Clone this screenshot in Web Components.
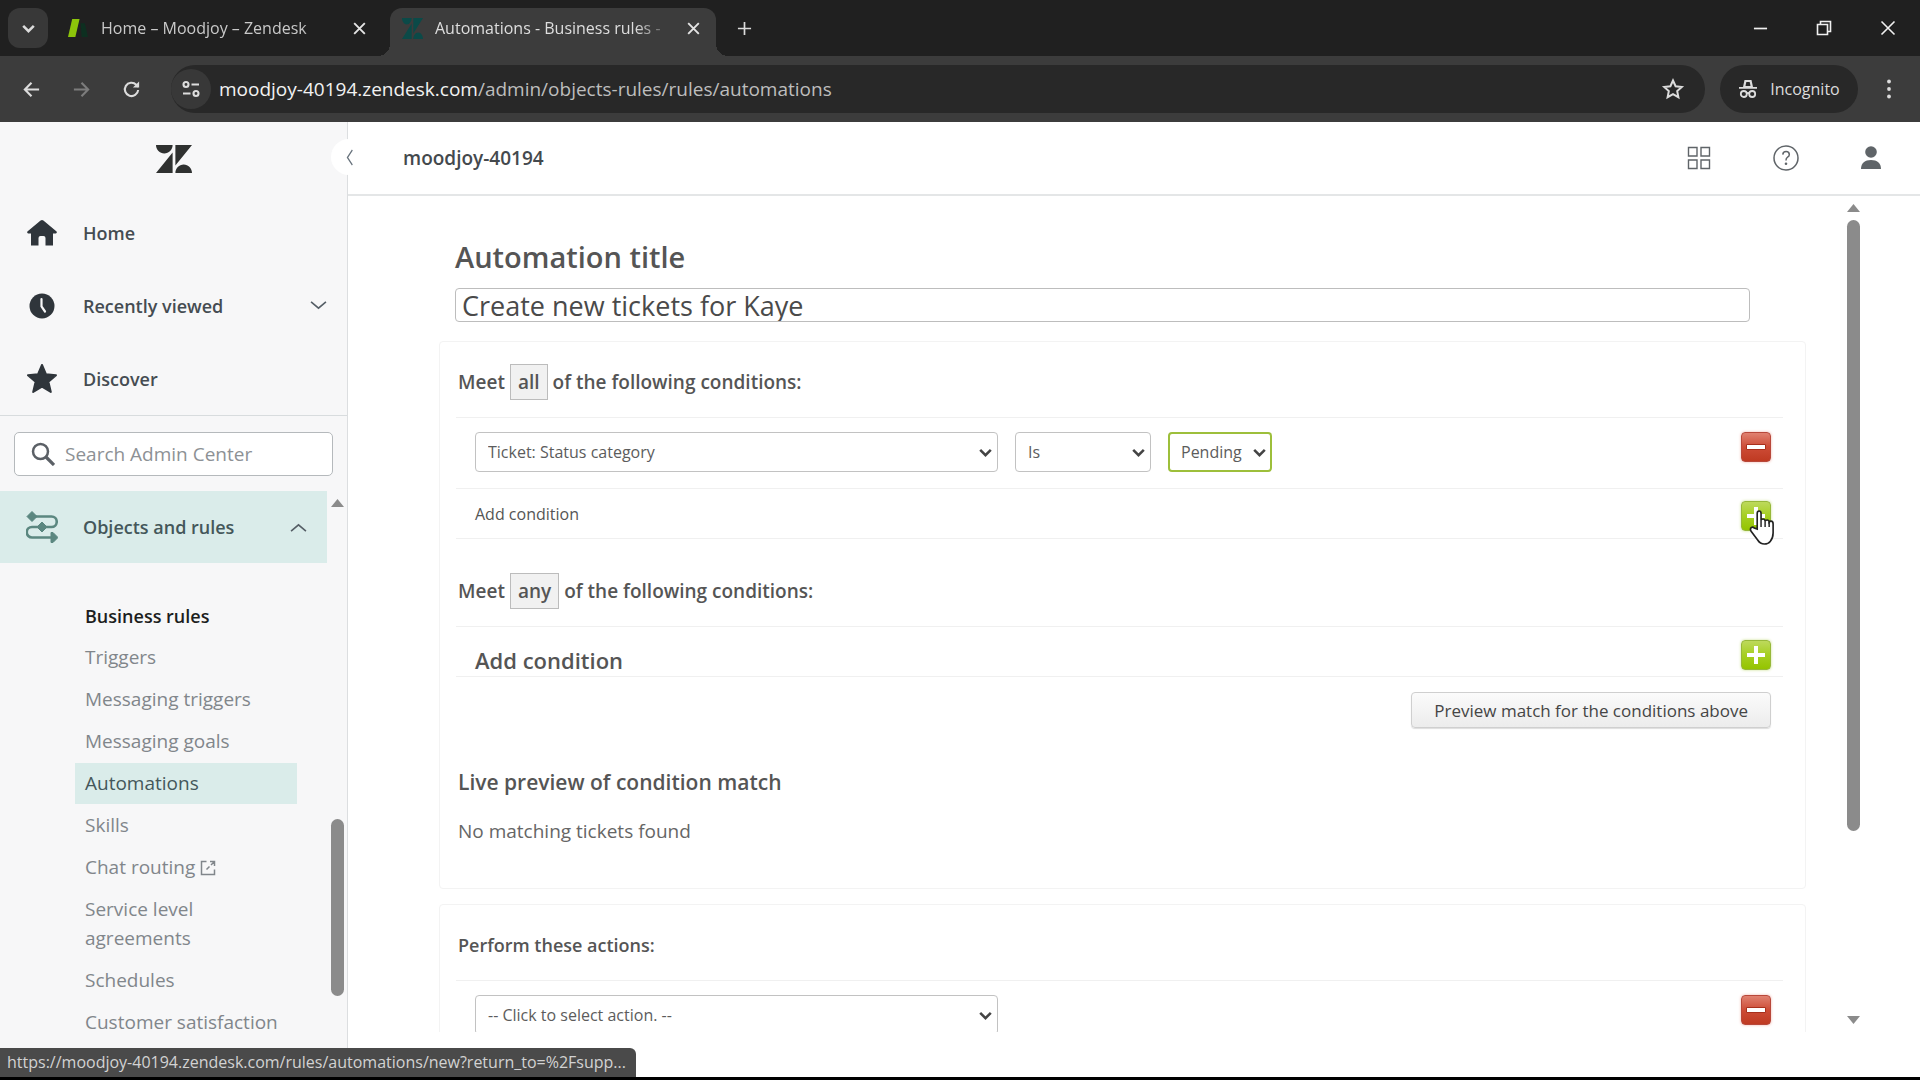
<!DOCTYPE html>
<html lang="en">
<head>
<meta charset="utf-8">
<title>Automations - Business rules - Zendesk</title>
<style>
  body {
    margin: 0;
    font-family: "Open Sans", "Noto Sans", sans-serif;
    color: #555;
    background: #000;
  }
</style>
</head>
<body>
<browser-window>
  <browser-tab slot="tabs" icon="support">Home – Moodjoy – Zendesk</browser-tab>
  <browser-tab slot="tabs" icon="zendesk" active>Automations - Business rules -</browser-tab>
  <admin-sidebar></admin-sidebar>
  <admin-main>
    <automation-form></automation-form>
  </admin-main>
  <span slot="status">https://moodjoy-40194.zendesk.com/rules/automations/new?return_to=%2Fsupp...</span>
</browser-window>

<script>
// all icons, drawn with currentColor
const ICONS = {
  zendesk: ['0 3 26 19.7', '<path d="M12 8.2v14.5H0zM12 3c0 3.3-2.7 6-6 6S0 6.3 0 3h12zm2 19.7c0-3.3 2.7-6 6-6s6 2.7 6 6H14zm0-5.2V3h12z" fill="currentColor"/>'],
  support: ['0 0 20 20', '<path d="M12 5h4l3 13h-6z" fill="#0d2f20"/><path d="M4 1h7L7 18H0z" fill="#8cc40a"/>'],
  chevron: ['0 0 16 16', '<path d="M1 4.5l7 6 7-6" fill="none" stroke="currentColor" stroke-width="1.5"/>'],
  chevronBold: ['0 0 16 16', '<path d="M3 5.5l5 5 5-5" fill="none" stroke="currentColor" stroke-width="2.4"/>'],
  close: ['0 0 16 16', '<path d="M3 3l10 10M13 3L3 13" fill="none" stroke="currentColor" stroke-width="1.8"/>'],
  add: ['0 0 16 16', '<path d="M8 1v14M1 8h14" fill="none" stroke="currentColor" stroke-width="1.8"/>'],
  minimize: ['0 0 16 16', '<path d="M1 8h14" stroke="currentColor" stroke-width="1.8"/>'],
  restore: ['0 0 16 16', '<path d="M1.5 4.5h10v10h-10zM4.5 4.5v-3h10v10h-3" fill="none" stroke="currentColor" stroke-width="1.6"/>'],
  windowClose: ['0 0 16 16', '<path d="M1.5 1.5l13 13M14.5 1.5l-13 13" stroke="currentColor" stroke-width="1.6"/>'],
  back: ['0 0 20 20', '<path d="M18 10H3M10 3l-7 7 7 7" fill="none" stroke="currentColor" stroke-width="2.2"/>'],
  forward: ['0 0 20 20', '<path d="M2 10h15M10 3l7 7-7 7" fill="none" stroke="currentColor" stroke-width="2.2"/>'],
  reload: ['0 0 20 20', '<path d="M17 10.5a7 7 0 1 1-2-5.5l2 2" fill="none" stroke="currentColor" stroke-width="2.2"/><path d="M18 1.5V8h-6.5z" fill="currentColor"/>'],
  tune: ['0 0 20 20', '<g fill="none" stroke="currentColor" stroke-width="2.1"><circle cx="5" cy="5.5" r="2.5"/><path d="M10.5 5.5H18M2 14.5h7.5"/><circle cx="15" cy="14.5" r="2.5"/></g>'],
  starLine: ['0 0 24 24', '<path d="M12 3.5l2.6 5.7 6.2.7-4.6 4.2 1.2 6.1-5.4-3.1-5.4 3.1 1.2-6.1L3.2 9.9l6.2-.7z" fill="none" stroke="currentColor" stroke-width="2"/>'],
  incognito: ['0 0 20 20', '<path d="M5 8L6.5 1h7L15 8h4v1.8H1V8z" fill="currentColor"/><path d="M7.5 7h5l-.8-4H8.3z" fill="#282828"/><g fill="none" stroke="currentColor" stroke-width="1.8"><circle cx="5.8" cy="15" r="3"/><circle cx="14.2" cy="15" r="3"/><path d="M8.5 14.5q1.5-1 3 0"/></g>'],
  dots: ['0 0 20 20', '<g fill="currentColor"><circle cx="10" cy="2.5" r="1.9"/><circle cx="10" cy="10" r="1.9"/><circle cx="10" cy="17.5" r="1.9"/></g>'],
  home: ['0 0 30 30', '<path d="M13.6 2.6a2 2 0 0 1 2.8 0L29.6 13.4q.8 1.6-.8 2.1H26v12h-7.5V20a2 2 0 0 0-2-2h-3a2 2 0 0 0-2 2v7.5H4v-12H1.2Q-.4 15 .4 13.4z" fill="currentColor"/>'],
  clock: ['0 0 26 26', '<circle cx="13" cy="13" r="12.5" fill="currentColor"/><path d="M12.5 6v7.5l3.5 5" fill="none" stroke="#f7f7f8" stroke-width="2.2" stroke-linecap="round"/>'],
  star: ['0 0 30 30', '<path d="M15 1l4 9.3 10 .9-7.6 6.6 2.4 10.2-8.8-5.3L6.2 28l2.4-10.2L1 11.2l10-.9z" fill="currentColor" stroke="currentColor" stroke-width="2" stroke-linejoin="round"/>'],
  search: ['0 0 24 24', '<circle cx="9.5" cy="9.5" r="7.5" fill="none" stroke="currentColor" stroke-width="2.5"/><path d="M15 15l8 8" stroke="currentColor" stroke-width="3.2"/>'],
  objects: ['0 0 32 32', '<path d="M6 5.5h19.5a5.25 5.25 0 0 1 0 10.5H6a5.25 5.25 0 0 0 0 10.5h20" fill="none" stroke="currentColor" stroke-width="2.6"/><path d="M6 .5l5 5-5 5-5-5zM16 11l5 5-5 5-5-5zM25 21.5h2l5 5-5 5h-2z" fill="currentColor" stroke="currentColor" stroke-linejoin="round"/>'],
  external: ['0 0 16 16', '<path d="M6.5 1.5h-5v13h13v-5M6.5 9.5l3-3M10 1.5h4.5V6M14.5 1.5L11 5" fill="none" stroke="currentColor" stroke-width="1.5"/>'],
  grid: ['0 0 24 24', '<path d="M1.5 1.5H10V10H1.5zM14 1.5h8.5V10H14zM1.5 14H10v8.5H1.5zM14 14h8.5v8.5H14z" fill="none" stroke="currentColor" stroke-width="1.4"/>'],
  help: ['0 0 26 26', '<circle cx="13" cy="13" r="12" fill="none" stroke="currentColor" stroke-width="1.5"/><path d="M9.8 9.6q.2-3 3.3-3t3.2 2.8q0 1.7-1.7 2.8T13 15.5" fill="none" stroke="currentColor" stroke-width="1.5"/><circle cx="13" cy="18.8" r="1.3" fill="currentColor"/>'],
  user: ['0 0 20 24', '<circle cx="10" cy="6" r="5.8" fill="currentColor"/><path d="M0 23c0-6 4-9 10-9s10 3 10 9z" fill="currentColor"/>'],
  up: ['0 0 12 8', '<path d="M6 0l6 8H0z" fill="currentColor"/>'],
  down: ['0 0 12 8', '<path d="M0 0h12L6 8z" fill="currentColor"/>'],
  hand: ['0 0 28 36', '<path d="M8.5 19V3.5Q8.5 1 10.5 1t2 2.5V10q.3-1 2-1 2 0 2.2 2 .3-1 2-1 2 0 2.2 2 .5-.8 2-.8 2.1 0 2.1 2.8v9q0 5-3 8.500-2 2.500-6 2.500-4.500 0-7-4L2 21q-1.200-2.500.5-3.500 1.500-.8 3 .5z" fill="#fff" stroke="#222" stroke-width="1.7"/><path d="M12.5 10v7M16.7 11v6M20.9 12v5" stroke="#222" stroke-width="1.5"/>']
};

class UiIcon extends HTMLElement {
  connectedCallback() {
    const [box, shapes] = ICONS[this.getAttribute('name')];
    const width = this.getAttribute('width') || 16;
    const height = this.getAttribute('height') || width;
    this.attachShadow({ mode: 'open' }).innerHTML = `
      <style>
        :host { display: inline-flex; flex: none; }
        svg { display: block; }
      </style>
      <svg width="${width}" height="${height}" viewBox="${box}" preserveAspectRatio="none" aria-hidden="true">${shapes}</svg>
    `;
  }
}

class BrowserTab extends HTMLElement {
  connectedCallback() {
    this.attachShadow({ mode: 'open' }).innerHTML = `
      <style>
        :host {
          display: flex;
          align-items: center;
          gap: 12px;
          box-sizing: border-box;
          flex: 0 1 326px;
          min-width: 0;
          height: 48px;
          padding: 0 14px 8px 12px;
          color: #c9c9c9;
          font-size: 16px;
        }
        :host([active]) {
          position: relative;
          background: #3c3c3c;
          border-radius: 12px 12px 0 0;
          color: #dedede;
        }
        /* flared feet of the active tab */
        :host([active])::before, :host([active])::after {
          content: "";
          position: absolute;
          bottom: 0;
          width: 12px;
          height: 12px;
        }
        :host([active])::before {
          right: 100%;
          background: radial-gradient(circle at 0 0, transparent 12px, #3c3c3c 12px);
        }
        :host([active])::after {
          left: 100%;
          background: radial-gradient(circle at 100% 0, transparent 12px, #3c3c3c 12px);
        }
        .icon { color: #0b4a48; }
        .title {
          flex: 1;
          min-width: 0;
          overflow: hidden;
          white-space: nowrap;
          mask-image: linear-gradient(90deg, #000 84%, transparent);
        }
        button {
          display: flex;
          padding: 0;
          border: 0;
          background: none;
          color: #e4e4e4;
        }
      </style>
      <ui-icon class="icon" name="${this.getAttribute('icon')}" width="21"></ui-icon>
      <span class="title"><slot></slot></span>
      <button aria-label="Close tab"><ui-icon name="close" width="17"></ui-icon></button>
    `;
  }
}

class BrowserWindow extends HTMLElement {
  connectedCallback() {
    this.attachShadow({ mode: 'open' }).innerHTML = `
      <style>
        :host {
          display: flex;
          flex-direction: column;
          position: relative;
          box-sizing: border-box;
          height: 100vh;
          padding-bottom: 3px;
        }
        button {
          display: flex;
          align-items: center;
          justify-content: center;
          padding: 0;
          border: 0;
          background: none;
          color: #dcdcdc;
          font: inherit;
        }
        .tabs {
          display: flex;
          align-items: flex-end;
          gap: 8px;
          flex: none;
          height: 56px;
          padding-left: 8px;
          background: #202020;
        }
        .search-tabs {
          width: 40px;
          height: 40px;
          margin-bottom: 8px;
          border-radius: 12px;
          background: #383838;
        }
        .new-tab { width: 40px; height: 56px; }
        .window { display: flex; margin-left: auto; }
        .window button { width: 64px; height: 56px; color: #f0f0f0; }
        .toolbar {
          display: flex;
          align-items: center;
          flex: none;
          box-sizing: border-box;
          height: 66px;
          padding: 0 6px;
          background: #3c3c3c;
        }
        .toolbar > button { width: 50px; height: 48px; }
        .toolbar > .forward { color: #7c7c7c; }
        .address {
          display: flex;
          align-items: center;
          flex: 1;
          height: 48px;
          margin: 0 15px;
          padding-right: 20px;
          border-radius: 24px;
          background: #282828;
          color: #bdbdbd;
          font-size: 19px;
        }
        .site {
          width: 40px;
          height: 40px;
          margin-right: 8px;
          border-radius: 50%;
          background: #383838;
        }
        .url { flex: 1; }
        .url b { font-weight: 400; color: #f2f2f2; }
        .toolbar > .incognito {
          gap: 12px;
          width: 138px;
          margin-right: 6px;
          border-radius: 24px;
          background: #282828;
          font-size: 16px;
        }
        .page {
          display: flex;
          flex: 1;
          min-height: 0;
          background: #fff;
        }
        .status {
          position: absolute;
          left: 0;
          bottom: 3px;
          padding: 0 10px 0 7px;
          border-radius: 0 6px 0 0;
          background: #4a4a4a;
          color: #d2d2d2;
          font-size: 16px;
          line-height: 29px;
        }
      </style>
      <header class="tabs">
        <button class="search-tabs" aria-label="Search tabs"><ui-icon name="chevronBold" width="17"></ui-icon></button>
        <slot name="tabs"></slot>
        <button class="new-tab" aria-label="New tab"><ui-icon name="add" width="15"></ui-icon></button>
        <div class="window">
          <button aria-label="Minimize"><ui-icon name="minimize" width="15"></ui-icon></button>
          <button aria-label="Restore"><ui-icon name="restore" width="16"></ui-icon></button>
          <button aria-label="Close"><ui-icon name="windowClose" width="16"></ui-icon></button>
        </div>
      </header>
      <nav class="toolbar">
        <button aria-label="Back"><ui-icon name="back" width="19"></ui-icon></button>
        <button class="forward" aria-label="Forward"><ui-icon name="forward" width="19"></ui-icon></button>
        <button aria-label="Reload"><ui-icon name="reload" width="19"></ui-icon></button>
        <div class="address">
          <button class="site" aria-label="Site information"><ui-icon name="tune" width="20"></ui-icon></button>
          <div class="url" role="textbox" aria-label="Address"><b>moodjoy-40194.zendesk.com</b>/admin/objects-rules/rules/automations</div>
          <button aria-label="Bookmark"><ui-icon name="starLine" width="24"></ui-icon></button>
        </div>
        <button class="incognito"><ui-icon name="incognito" width="20"></ui-icon>Incognito</button>
        <button aria-label="Menu"><ui-icon name="dots" width="20"></ui-icon></button>
      </nav>
      <div class="page"><slot></slot></div>
      <div class="status"><slot name="status"></slot></div>
    `;
  }
}

/* decorative track: arrow, thumb, arrow. Thumb size comes from the --before, --thumb and --after shares */
class ScrollTrack extends HTMLElement {
  connectedCallback() {
    this.attachShadow({ mode: 'open' }).innerHTML = `
      <style>
        :host {
          display: flex;
          flex-direction: column;
          align-items: center;
          flex: none;
          box-sizing: border-box;
          width: 20px;
          padding: 8px 0;
          color: #8b8b8b;
        }
        .track {
          display: flex;
          flex-direction: column;
          flex: 1;
          width: 13px;
          margin: 8px 0;
        }
        .before { flex: var(--before, 0); }
        .thumb { flex: var(--thumb, 1); border-radius: 7px; background: #8b8b8b; }
        .after { flex: var(--after, 0); }
      </style>
      <ui-icon name="up" width="13" height="8"></ui-icon>
      <div class="track"><div class="before"></div><div class="thumb"></div><div class="after"></div></div>
      <ui-icon name="down" width="13" height="8"></ui-icon>
    `;
  }
}

class SidebarItem extends HTMLElement {
  connectedCallback() {
    const chevron = this.getAttribute('chevron');
    this.attachShadow({ mode: 'open' }).innerHTML = `
      <style>
        :host { display: block; }
        a {
          display: flex;
          align-items: center;
          box-sizing: border-box;
          height: 73px;
          padding: 0 20px 0 22px;
          color: #454c52;
          font-size: 18px;
          font-weight: 600;
          text-decoration: none;
        }
        .icon {
          display: flex;
          justify-content: center;
          width: 40px;
          margin-right: 21px;
          color: #2f353b;
        }
        .label { flex: 1; }
        .chevron { color: #555e66; }
        :host([active]) a { height: 72px; background: #daecea; color: #44575a; }
        :host([active]) .icon { color: #5b8780; }
        .chevron.up { transform: rotate(180deg); }
      </style>
      <a href="#">
        <span class="icon"><ui-icon name="${this.getAttribute('icon')}" width="${this.getAttribute('size')}"></ui-icon></span>
        <span class="label"><slot></slot></span>
        ${chevron ? `<ui-icon class="chevron ${chevron}" name="chevron" width="17"></ui-icon>` : ''}
      </a>
    `;
  }
}

class AdminSidebar extends HTMLElement {
  connectedCallback() {
    this.attachShadow({ mode: 'open' }).innerHTML = `
      <style>
        :host {
          display: flex;
          flex-direction: column;
          position: relative;
          flex: none;
          box-sizing: border-box;
          width: 348px;
          border-right: 1px solid #dcdee0;
          background: #f7f7f8;
        }
        .logo {
          display: flex;
          align-items: center;
          justify-content: center;
          flex: none;
          height: 74px;
          color: #2f3130;
        }
        .collapse {
          position: absolute;
          top: 17px;
          right: -20px;
          display: flex;
          align-items: center;
          justify-content: center;
          width: 36px;
          height: 36px;
          padding: 0;
          border: 0;
          border-radius: 50%;
          background: #fff;
          color: #68737d;
        }
        .collapse ui-icon { transform: rotate(90deg); }
        .search {
          display: flex;
          align-items: center;
          gap: 10px;
          flex: none;
          box-sizing: border-box;
          height: 44px;
          margin: 16px 14px 15px;
          padding: 0 16px;
          border: 1px solid #b5b9bc;
          border-radius: 5px;
          background: #fff;
          color: #5b6066;
        }
        .divider { flex: none; height: 1px; background: #d8dcde; }
        .search input {
          flex: 1;
          min-width: 0;
          padding: 0;
          border: 0;
          outline: 0;
          background: none;
          font: inherit;
          font-size: 19px;
        }
        .search input::placeholder { color: #8d9195; }
        .scroller { display: flex; flex: 1; min-height: 0; }
        .content { flex: 1; overflow: hidden; }
        h2 {
          margin: 39px 0 6px 85px;
          color: #1c1e20;
          font-size: 18px;
          font-weight: 600;
          line-height: 29px;
        }
        ul {
          display: grid;
          gap: 1px;
          margin: 0 30px 0 75px;
          padding: 0;
          list-style: none;
        }
        li a {
          display: block;
          padding: 6px 0 6px 10px;
          color: #81868b;
          font-size: 19px;
          line-height: 29px;
          text-decoration: none;
        }
        li a.current { background: #daecea; color: #44575a; }
        li a.short { padding-right: 80px; }
        li ui-icon { vertical-align: -2px; }
        /* the list continues below the fold */
        scroll-track { --before: 303; --thumb: 176; --after: 57; }
      </style>
      <div class="logo"><ui-icon name="zendesk" width="36" height="28"></ui-icon></div>
      <button class="collapse" aria-label="Collapse sidebar"><ui-icon name="chevron" width="17" height="13"></ui-icon></button>
      <sidebar-item icon="home" size="30">Home</sidebar-item>
      <sidebar-item icon="clock" size="26" chevron="down">Recently viewed</sidebar-item>
      <sidebar-item icon="star" size="30">Discover</sidebar-item>
      <div class="divider"></div>
      <label class="search">
        <ui-icon name="search" width="24"></ui-icon>
        <input type="search" placeholder="Search Admin Center" aria-label="Search Admin Center">
      </label>
      <div class="scroller">
        <div class="content">
          <sidebar-item icon="objects" size="32" chevron="up" active>Objects and rules</sidebar-item>
          <h2>Business rules</h2>
          <ul>
            <li><a href="#">Triggers</a></li>
            <li><a href="#">Messaging triggers</a></li>
            <li><a href="#">Messaging goals</a></li>
            <li><a href="#" class="current">Automations</a></li>
            <li><a href="#">Skills</a></li>
            <li><a href="#">Chat routing <ui-icon name="external" width="16"></ui-icon></a></li>
            <li><a href="#" class="short">Service level agreements</a></li>
            <li><a href="#">Schedules</a></li>
            <li><a href="#">Customer satisfaction</a></li>
          </ul>
        </div>
        <scroll-track></scroll-track>
      </div>
    `;
  }
}

class AdminMain extends HTMLElement {
  connectedCallback() {
    this.attachShadow({ mode: 'open' }).innerHTML = `
      <style>
        :host {
          display: flex;
          flex-direction: column;
          flex: 1;
          min-width: 0;
          background: #fff;
        }
        header {
          display: flex;
          align-items: center;
          gap: 62px;
          flex: none;
          height: 72px;
          padding: 0 39px 0 55px;
          border-bottom: 2px solid #e4e6e7;
          color: #5f6468;
        }
        strong {
          flex: 1;
          color: #44494d;
          font-size: 19px;
          font-weight: 600;
        }
        button {
          display: flex;
          padding: 0;
          border: 0;
          background: none;
          color: inherit;
        }
        .scroller {
          display: flex;
          flex: 1;
          min-height: 0;
          margin: 0 57px 45px 0;
        }
        .content { flex: 1; min-width: 0; overflow: hidden; }
        scroll-track { --thumb: 611; --after: 177; }
      </style>
      <header>
        <strong>moodjoy-40194</strong>
        <button aria-label="Products"><ui-icon name="grid" width="24"></ui-icon></button>
        <button aria-label="Help"><ui-icon name="help" width="26"></ui-icon></button>
        <button aria-label="Account"><ui-icon name="user" width="20" height="24"></ui-icon></button>
      </header>
      <div class="scroller">
        <div class="content"><slot></slot></div>
        <scroll-track></scroll-track>
      </div>
    `;
  }
}

class SelectBox extends HTMLElement {
  connectedCallback() {
    this.attachShadow({ mode: 'open' }).innerHTML = `
      <style>
        :host { display: grid; align-items: center; color: #5c5c5c; }
        select, ui-icon { grid-area: 1 / 1; }
        select {
          appearance: none;
          box-sizing: border-box;
          width: 100%;
          height: 40px;
          padding: 0 28px 0 12px;
          border: 1px solid #c2c2c2;
          border-radius: 4px;
          outline: 0;
          background: #fff;
          color: inherit;
          font: inherit;
          font-size: 16px;
        }
        :host([focused]) select { border: 2px solid #9dbf3b; padding-left: 11px; }
        ui-icon { justify-self: end; margin-right: 4px; color: #444; pointer-events: none; }
      </style>
      <select aria-label="${this.getAttribute('label')}"><option>${this.getAttribute('value')}</option></select>
      <ui-icon name="chevronBold" width="17"></ui-icon>
    `;
  }
}

class RowButton extends HTMLElement {
  connectedCallback() {
    const isAdd = this.getAttribute('kind') === 'add';
    this.attachShadow({ mode: 'open' }).innerHTML = `
      <style>
        :host { display: block; position: relative; flex: none; }
        button {
          display: grid;
          place-items: center;
          width: 30px;
          height: 30px;
          padding: 0;
          border: 1px solid ${isAdd ? '#97b83a' : '#b8483a'};
          border-radius: 4px;
          background: ${isAdd ? 'linear-gradient(#bdd95c, #a6cf22 50%, #94c400)' : 'linear-gradient(#e08170, #cd4c36 50%, #bf3a22)'};
          box-shadow: 0 0 3px ${isAdd ? '#c8e08a' : '#f0b4aa'};
        }
        svg { display: block; }
        ::slotted(*) { position: absolute; left: 8px; top: 9px; }
      </style>
      <button aria-label="${isAdd ? 'Add condition' : 'Remove'}">
        <svg width="20" height="20" viewBox="0 0 20 20">
          ${isAdd
            ? '<path d="M8 1h4v7h7v4h-7v7H8v-7H1V8h7z" fill="#fff"/>'
            : '<path d="M.5 7.5h19v5H.5z" fill="#fff" stroke="#a8301c"/>'}
        </svg>
      </button>
      <slot></slot>
    `;
  }
}

class RulePanel extends HTMLElement {
  connectedCallback() {
    this.attachShadow({ mode: 'open' }).innerHTML = `
      <style>
        :host {
          display: block;
          padding: 22px 22px 45px 16px;
          border: 1px solid #f3f3f3;
          border-radius: 4px;
        }
      </style>
      <slot></slot>
    `;
  }
}

class AutomationForm extends HTMLElement {
  connectedCallback() {
    this.attachShadow({ mode: 'open' }).innerHTML = `
      <style>
        :host { display: block; padding: 42px 37px 0 91px; }
        .title { display: grid; gap: 12px; margin: 0 56px 19px 16px; }
        .title label {
          font-size: 29px;
          font-weight: 600;
          line-height: 38px;
        }
        .title input {
          box-sizing: border-box;
          width: 100%;
          height: 34px;
          padding: 0 6px;
          border: 1px solid #bdbdbd;
          border-radius: 4px;
          outline: 0;
          color: #4a4a4a;
          font: inherit;
          font-size: 27px;
          line-height: 32px;
        }
        rule-panel { margin-bottom: 15px; }
        h3 {
          display: flex;
          align-items: center;
          gap: 5px;
          height: 36px;
          margin: 0 0 17px 2px;
          font-size: 19px;
          font-weight: 600;
        }
        h3.actions { font-size: 18px; }
        h3 em {
          padding: 0 7px;
          border: 1px solid #bcbcbc;
          background: #f1f1f1;
          font-style: normal;
          line-height: 34px;
        }
        .row {
          display: flex;
          align-items: flex-start;
          gap: 17px;
          box-sizing: border-box;
          height: 71px;
          padding: 14px 12px 0 19px;
          border-top: 1px solid #f0f0f0;
        }
        .row row-button { margin-left: auto; }
        .wide { flex: 0 1 523px; }
        .medium { flex: 0 1 136px; }
        .add {
          display: flex;
          align-items: flex-start;
          justify-content: space-between;
          height: 37px;
          padding: 12px 12px 0 19px;
          border: solid #f0f0f0;
          border-width: 1px 0;
          font-size: 16px;
          line-height: 26px;
        }
        .add.large {
          align-items: flex-end;
          height: 49px;
          padding-top: 0;
          font-size: 22px;
          font-weight: 600;
          line-height: 32px;
        }
        .add.large row-button { margin-bottom: 6px; }
        .any { margin-top: 34px; }
        .preview {
          display: block;
          height: 36px;
          margin: 15px 12px 40px auto;
          padding: 0 22px;
          border: 1px solid #cfcfcf;
          border-radius: 4px;
          background: linear-gradient(#fbfbfb, #ececec);
          box-shadow: 0 1px 1px #ddd;
          color: #454545;
          font: inherit;
          font-size: 17px;
        }
        h4 {
          margin: 0 0 23px 2px;
          font-size: 21px;
          font-weight: 600;
          line-height: 28px;
        }
        p {
          margin: 0 0 0 2px;
          color: #666;
          font-size: 19px;
          line-height: 24px;
        }
      </style>
      <div class="title">
        <label for="title">Automation title</label>
        <input id="title" value="Create new tickets for Kaye">
      </div>
      <rule-panel>
        <h3>Meet <em>all</em> of the following conditions:</h3>
        <div class="row">
          <select-box class="wide" label="Field" value="Ticket: Status category"></select-box>
          <select-box class="medium" label="Operator" value="Is"></select-box>
          <select-box label="Value" value="Pending" focused></select-box>
          <row-button kind="remove"></row-button>
        </div>
        <div class="add">Add condition <row-button kind="add"><ui-icon name="hand" width="27" height="36"></ui-icon></row-button></div>
        <h3 class="any">Meet <em>any</em> of the following conditions:</h3>
        <div class="add large">Add condition <row-button kind="add"></row-button></div>
        <button class="preview">Preview match for the conditions above</button>
        <h4>Live preview of condition match</h4>
        <p>No matching tickets found</p>
      </rule-panel>
      <rule-panel>
        <h3 class="actions">Perform these actions:</h3>
        <div class="row">
          <select-box class="wide" label="Action" value="-- Click to select action. --"></select-box>
          <row-button kind="remove"></row-button>
        </div>
      </rule-panel>
    `;
  }
}

// register components
customElements.define('ui-icon', UiIcon);
customElements.define('browser-tab', BrowserTab);
customElements.define('browser-window', BrowserWindow);
customElements.define('scroll-track', ScrollTrack);
customElements.define('sidebar-item', SidebarItem);
customElements.define('admin-sidebar', AdminSidebar);
customElements.define('admin-main', AdminMain);
customElements.define('select-box', SelectBox);
customElements.define('row-button', RowButton);
customElements.define('rule-panel', RulePanel);
customElements.define('automation-form', AutomationForm);
</script>
</body>
</html>
